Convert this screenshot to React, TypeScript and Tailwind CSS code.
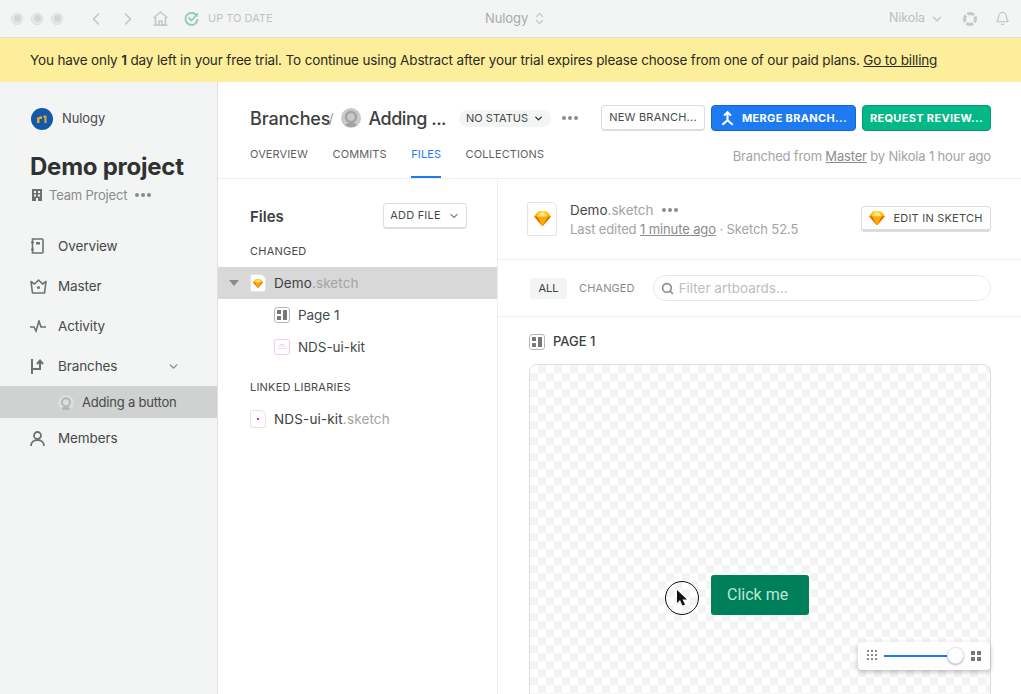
import { Bell, ChevronDown, ChevronLeft, ChevronRight, ChevronsUpDown, Search } from "lucide-react"

const font = "font-['Inter','Liberation_Sans',sans-serif]"

function Diamond({ size = 18 }: { size?: number }) {
  return (
    <svg width={size} height={size * 0.9} viewBox="0 0 20 18">
      <path d="M4.5 1 10 .4 15.5 1 20 6.6 10 18 0 6.6z" fill="#fdb300" />
      <path d="M0 6.6h20L10 18z" fill="#ea6c00" />
      <path d="M4 6.6h12L10 18z" fill="#fdad00" />
      <path d="M4.5 1 4 6.6h12L15.5 1 10 .4z" fill="#fed305" />
      <path d="M10 .4 4 6.6h12z" fill="#fee79a" />
    </svg>
  )
}

function FileIcon({ className, children }: { className: string; children?: React.ReactNode }) {
  return (
    <div className={"relative flex items-center justify-center bg-white border border-[#e4e5e5] rounded-[2px] rounded-tr-[6px] " + className}>
      {children}
    </div>
  )
}

function PageIcon() {
  return (
    <svg width="16" height="16" viewBox="0 0 16 16" className="shrink-0">
      <rect x=".5" y=".5" width="15" height="15" rx="2.5" fill="#fff" stroke="#b5b7b7" />
      <rect x="3" y="3" width="4" height="4" rx=".5" fill="#777" />
      <rect x="3" y="9" width="4" height="4" rx=".5" fill="#777" />
      <rect x="9" y="3" width="4" height="10" rx=".5" fill="#777" />
    </svg>
  )
}

function Avatar({ size, bg, fg, className = "" }: { size: number; bg: string; fg: string; className?: string }) {
  return (
    <svg width={size} height={size} viewBox="0 0 20 20" className={"shrink-0 " + className}>
      <circle cx="10" cy="10" r="10" fill={bg} />
      <circle cx="10" cy="9" r="5" fill="none" stroke={fg} strokeWidth="2.4" />
      <path d="M4 17c2-3 10-3 12 0l-3 2H7z" fill={fg} />
    </svg>
  )
}

function Dots({ className = "" }: { className?: string }) {
  return (
    <span className={"flex gap-[2px] " + className}>
      <span className="w-1 h-1 rounded-full bg-[#8a8c8c]" />
      <span className="w-1 h-1 rounded-full bg-[#8a8c8c]" />
      <span className="w-1 h-1 rounded-full bg-[#8a8c8c]" />
    </span>
  )
}

function Light() {
  return (
    <span className="flex items-center justify-center w-3 h-3 rounded-full border border-[#dcdddd] bg-[#e8e9e9]">
      <span className="w-[7px] h-[7px] rounded-full bg-[#d4d5d5]" />
    </span>
  )
}

function NavItem({ icon, label, right, className = "" }: { icon: React.ReactNode; label: string; right?: React.ReactNode; className?: string }) {
  return (
    <div className={"flex items-center h-10 pt-[2px] pl-[30px] pr-[37px] " + className}>
      <span className="flex w-[28px] shrink-0">{icon}</span>
      <span className="text-[13.5px] tracking-[-0.1px] text-[#474a4a] flex-1">{label}</span>
      {right}
    </div>
  )
}

const stroke = { fill: "none", stroke: "#6f7171", strokeWidth: 2 }

export default function App() {
  return (
    <div className={"w-[1021px] h-[694px] overflow-hidden bg-white flex flex-col " + font}>
      {/* toolbar */}
      <div className="h-[38px] shrink-0 bg-[#f3f4f4] border-b border-[#dcdddd] flex items-center relative pl-[11px] pr-[11px]">
        <div className="flex gap-2">
          <Light />
          <Light />
          <Light />
        </div>
        <ChevronLeft size={20} strokeWidth={2} className="text-[#c6c7c7] ml-[23px]" />
        <ChevronRight size={20} strokeWidth={2} className="text-[#c6c7c7] ml-3" />
        <svg width="15" height="15" viewBox="0 0 15 15" className="ml-[15px]">
          <path d="M7.500 1 1 6.500h1.500V14h3.500v-4h3v4h3.500V6.500H14z" fill="none" stroke="#c6c7c7" strokeWidth="1.600" strokeLinejoin="round" />
          <path d="M0.500 14.200h14" stroke="#c6c7c7" strokeWidth="1.400" />
        </svg>
        <svg width="15" height="15" viewBox="0 0 15 15" className="ml-[16px]">
          <path d="M13 5.500A6 6 0 1 0 13.500 8" fill="none" stroke="#8fcbb8" strokeWidth="1.800" />
          <path d="M4.500 6.500 7.500 9.500 14 2.500" fill="none" stroke="#8fcbb8" strokeWidth="1.800" />
        </svg>
        <span className="ml-[9px] text-[11px] text-[#c2c3c3]">UP TO DATE</span>
        <div className="absolute left-[485px] top-0 h-[37px] flex items-center gap-[4px] text-[13px] tracking-[-0.1px] text-[#a9abab]">
          Nulogy
          <ChevronsUpDown size={15} className="text-[#c6c7c7]" />
        </div>
        <div className="ml-auto flex items-center">
          <span className="text-[12.500px] tracking-[-0.1px] text-[#bdbebe]">Nikola</span>
          <ChevronDown size={14} strokeWidth={2.500} className="text-[#c6c7c7] ml-[5px]" />
          <svg width="16" height="16" viewBox="0 0 16 16" className="ml-[18px]">
            <circle cx="8" cy="8" r="5.500" fill="none" stroke="#c6c7c7" strokeWidth="3" strokeDasharray="7 1.640" strokeDashoffset="3.500" />
          </svg>
          <Bell size={15} strokeWidth={2} className="text-[#c6c7c7] ml-[17px]" />
        </div>
      </div>

      {/* trial banner */}
      <div className="h-[44px] shrink-0 bg-[#fdee9b] flex items-center pl-[30px] text-[13.5px] tracking-[-0.14px] text-[#2b2b22]">
        <span>
          You have only <b className="font-semibold">1</b> day left in your free trial. To continue using Abstract after your trial expires please choose from one of our paid plans.{" "}
          <span className="underline">Go to billing</span>
        </span>
      </div>

      <div className="flex flex-1 min-h-0">
        {/* sidebar */}
        <aside className="w-[218px] shrink-0 bg-[#f3f4f4] border-r border-[#dfe0e0] flex flex-col">
          <div className="flex items-center gap-[9px] pl-[31px] pt-[26px]">
            <svg width="22" height="22" viewBox="0 0 22 22">
              <circle cx="11" cy="11" r="11" fill="#1259ac" />
              <path d="M6 15V9.500l5-1.500v3H8.500v4zM12.500 7.500h3V15h-2V10h-1z" fill="#e5a52a" />
            </svg>
            <span className="text-[13px] tracking-[-0.1px] text-[#474a4a]">Nulogy</span>
          </div>
          <h1 className="pl-[30px] mt-[22px] text-[24px] tracking-[-0.25px] leading-[30px] font-bold text-[#2f3232]">Demo project</h1>
          <div className="flex items-center pl-[32px] mt-[5px] text-[13px] tracking-[-0.2px] leading-[16px] text-[#8a8c8c]">
            <svg width="10" height="12" viewBox="0 0 10 12" className="mr-[7px]">
              <path d="M0 0h10v12H6V9H4v3H0zM2 2v2h2V2zM6 2v2h2V2zM2 5.500v2h2v-2zM6 5.500v2h2v-2z" fill="#6f7171" fillRule="evenodd" />
            </svg>
            Team Project
            <Dots className="ml-[8px]" />
          </div>

          <div className="mt-[22px]">
            <NavItem
              label="Overview"
              icon={
                <svg width="14" height="16" viewBox="0 0 14 16">
                  <path d="M2.500 1H12a1 1 0 0 1 1 1v12a1 1 0 0 1-1 1H2.500z M1 4.500h3M1 11.500h3" {...stroke} strokeWidth={1.600} />
                  <rect x="6" y="4" width="4" height="2.500" fill="#6f7171" />
                </svg>
              }
            />
            <NavItem
              label="Master"
              icon={
                <svg width="17" height="15" viewBox="0 0 17 15">
                  <path d="M1 2.500 4.500 5 8.500 1l4 4L16 2.500 14.500 14h-12z" {...stroke} strokeWidth={1.600} strokeLinejoin="round" />
                  <circle cx="8.500" cy="8.500" r="1.500" fill="#6f7171" />
                </svg>
              }
            />
            <NavItem
              label="Activity"
              icon={
                <svg width="17" height="13" viewBox="0 0 17 13">
                  <path d="M0 7h4l2 4 3-10 2 6h5" {...stroke} strokeWidth={1.600} />
                </svg>
              }
            />
            <NavItem
              label="Branches"
              right={<ChevronDown size={13} strokeWidth={2.500} className="text-[#8a8c8c]" />}
              icon={
                <svg width="15" height="15" viewBox="0 0 15 15">
                  <path d="M2 0v15M2 10h8V2M7 5l3-3.500L13 5" {...stroke} />
                </svg>
              }
            />
          </div>
          <div className="h-8 mt-[1px] pt-[2px] bg-[#d0d1d1] flex items-center pl-[58px] gap-[8px]">
            <Avatar size={16} bg="#dcdddd" fg="#b5b7b7" />
            <span className="text-[13px] tracking-[-0.2px] text-[#474a4a]">Adding a button</span>
          </div>
          <NavItem
            label="Members"
            className="-mt-[1px]"
            icon={
              <svg width="15" height="15" viewBox="0 0 15 15">
                <circle cx="7.500" cy="4.500" r="3.500" {...stroke} strokeWidth={1.800} />
                <path d="M1 15c0-8 13-8 13 0" {...stroke} strokeWidth={1.800} />
              </svg>
            }
          />
        </aside>

        {/* main */}
        <main className="flex-1 min-w-0 flex flex-col">
          <div className="h-[97px] shrink-0 border-b border-[#eeefef] flex flex-col pl-[32px] pr-[30px]">
            <div className="flex items-center pt-[16px] h-[56px]">
              <span className="text-[18px] tracking-[-0.1px] text-[#3d4040] font-medium">Branches</span>
              <span className="text-[14px] text-[#9a9c9c] -ml-[2px]">/</span>
              <Avatar size={20} bg="#c8c9c9" fg="#a2a4a4" className="ml-[8px]" />
              <span className="ml-[7px] text-[18px] tracking-[-0.5px] text-[#3d4040] font-medium">Adding ...</span>
              <span className="ml-[13px] h-[17px] w-[92px] rounded-full bg-[#f3f4f4] text-[11px] text-[#474a4a] flex items-center justify-center gap-[5px]">
                NO STATUS
                <ChevronDown size={11} strokeWidth={3} className="text-[#2f3232]" />
              </span>
              <Dots className="ml-[11px]" />
              <div className="ml-auto flex gap-[6px]">
                <button className="h-[26px] w-[104px] rounded-[4px] bg-white border border-[#dcdddd] border-b-2 text-[11px] tracking-[0.02em] text-[#474a4a]">NEW BRANCH...</button>
                <button className="h-[26px] w-[145px] rounded-[4px] bg-[#1d7af0] border border-[#1566ce] text-[11px] tracking-[0.03em] font-bold text-white flex items-center justify-center gap-[7px]">
                  <svg width="15" height="15" viewBox="0 0 13 13">
                    <path d="M6.500 8 2 12M6.500 8l4.500 4M3.500 4l3-3 3 3M6.500 1v7" fill="none" stroke="#fff" strokeWidth="1.800" />
                  </svg>
                  MERGE BRANCH...
                </button>
                <button className="h-[26px] w-[129px] rounded-[4px] bg-[#03b886] border border-[#049a71] text-[11px] tracking-[0.03em] font-bold text-white">REQUEST REVIEW...</button>
              </div>
            </div>
            <div className="flex items-end flex-1">
              <div className="flex gap-[24.500px] text-[11px] tracking-[0.01em] text-[#5f6262]">
                <span className="h-[38px] pt-[6px]">OVERVIEW</span>
                <span className="h-[38px] pt-[6px]">COMMITS</span>
                <span className="h-[38px] pt-[6px] text-[#1d7af0] border-b-2 border-[#1d7af0]">FILES</span>
                <span className="h-[38px] pt-[6px]">COLLECTIONS</span>
              </div>
              <span className="ml-auto self-start mt-[9px] text-[13px] tracking-[-0.17px] text-[#a2a4a4]">
                Branched from <span className="underline text-[#8a8c8c]">Master</span> by Nikola 1 hour ago
              </span>
            </div>
          </div>

          <div className="flex flex-1 min-h-0">
            {/* files pane */}
            <section className="w-[280px] shrink-0 border-r border-[#eeefef]">
              <div className="flex items-center justify-between pl-[32px] pr-[30px] pt-[24px]">
                <span className="text-[15px] font-semibold text-[#3d4040] pt-[2px]">Files</span>
                <button className="h-[26px] w-[84px] rounded-[4px] bg-white border border-[#dcdddd] border-b-2 text-[11px] tracking-[0.02em] text-[#474a4a] flex items-center justify-center gap-[7px]">
                  ADD FILE
                  <ChevronDown size={12} strokeWidth={2.500} className="text-[#8a8c8c]" />
                </button>
              </div>
              <div className="pl-[32px] mt-[14px] text-[11px] leading-[16px] tracking-[0.02em] text-[#474a4a]">CHANGED</div>
              <div className="mt-[8px] h-8 bg-[#d8d8d8] flex items-center pl-[11px]">
                <span className="w-0 h-0 border-x-[5px] border-x-transparent border-t-[6px] border-t-[#8a8c8c]" />
                <FileIcon className="ml-[11px] w-[16px] h-[18px]">
                  <Diamond size={10} />
                </FileIcon>
                <span className="ml-[8px] text-[13.5px] tracking-[0.1px] text-[#3d4040]">Demo<span className="text-[#a2a4a4]">.sketch</span></span>
              </div>
              <div className="h-8 flex items-center pl-[56px] gap-[8px] text-[13.5px] tracking-[-0.05px] text-[#474a4a]">
                <PageIcon />
                Page 1
              </div>
              <div className="h-8 flex items-center pl-[56px] gap-[8px] text-[13.5px] tracking-[-0.05px] text-[#474a4a]">
                <svg width="16" height="16" viewBox="0 0 16 16" className="shrink-0">
                  <rect x=".5" y=".5" width="15" height="15" rx="2" fill="#fff" stroke="#f5c6f2" />
                  <path d="M4 7h8M4 9.500h8M6 5.500h4" stroke="#f5d6f2" strokeWidth="1.200" />
                </svg>
                NDS-ui-kit
              </div>
              <div className="pl-[32px] mt-[16px] text-[11px] leading-[16px] tracking-[0.02em] text-[#474a4a]">LINKED LIBRARIES</div>
              <div className="mt-[8px] h-8 flex items-center pl-[32px] gap-[8px] text-[13.5px] tracking-[0.15px] text-[#3d4040]">
                <FileIcon className="w-[16px] h-[18px]">
                  <span className="w-[2px] h-[2px] bg-[#c026c0]" />
                </FileIcon>
                <span>NDS-ui-kit<span className="text-[#a2a4a4]">.sketch</span></span>
              </div>
            </section>

            {/* file detail */}
            <section className="flex-1 min-w-0 flex flex-col">
              <div className="h-[81px] shrink-0 border-b border-[#eeefef] flex items-center pl-[29px] pr-[30px]">
                <FileIcon className="w-[30px] h-[34px] -mt-[1px]">
                  <Diamond size={17} />
                </FileIcon>
                <div className="ml-[13px] mt-[1px]">
                  <div className="flex items-center text-[13.5px] leading-[18px] text-[#474a4a]">
                    Demo<span className="text-[#a2a4a4]">.sketch</span>
                    <Dots className="ml-[8px]" />
                  </div>
                  <div className="text-[13px] tracking-[-0.12px] leading-[20px] text-[#a2a4a4]">
                    Last edited <span className="underline text-[#8a8c8c]">1 minute ago</span> · Sketch 52.5
                  </div>
                </div>
                <button className="ml-auto h-[26px] w-[130px] rounded-[4px] bg-white border border-[#dcdddd] border-b-[3px] text-[11px] tracking-[0.02em] text-[#474a4a] flex items-center justify-center gap-[8px]">
                  <Diamond size={16} />
                  EDIT IN SKETCH
                </button>
              </div>
              <div className="h-[57px] shrink-0 border-b border-[#eeefef] flex items-center pl-[32px] pr-[30px]">
                <span className="h-[21px] w-[37px] rounded-[3px] bg-[#f3f4f4] flex items-center justify-center text-[11px] text-[#3d4040]">ALL</span>
                <span className="ml-[12px] text-[11px] tracking-[0.01em] text-[#8a8c8c]">CHANGED</span>
                <div className="ml-[18px] flex-1 h-[26px] rounded-full border border-[#e6e7e7] flex items-center pl-[7px] gap-[5px] text-[13.5px] text-[#bdbebe]">
                  <Search size={13} strokeWidth={3} className="text-[#8a8c8c]" />
                  Filter artboards...
                </div>
              </div>
              <div className="flex items-center gap-[8px] pl-[31px] pt-[15px] text-[13px] font-medium text-[#3d4040]">
                <PageIcon />
                PAGE 1
              </div>
              <div className="relative shrink-0 mr-[30px] ml-[31px] mt-[12px] h-[400px] rounded-[8px] border border-[#dcdddd] bg-[conic-gradient(#f3f4f4_25%,#ffffff_0_50%,#f3f4f4_0_75%,#ffffff_0)] bg-[length:16px_16px]">
                <button className="absolute left-[181px] top-[210px] w-[98px] h-[40px] rounded-[3px] bg-[#008059] pl-[16px] text-left text-[16px] text-[#bfe5d8] font-['Roboto','Liberation_Sans',sans-serif]">Click me</button>
                <div className="absolute left-[135px] top-[216px] w-[34px] h-[34px] rounded-full border border-[#111] flex items-center justify-center">
                  <svg width="12" height="16" viewBox="0 0 12 16">
                    <path d="M1 0v13l3-3 2.500 5.500 2.500-1L6.500 9.500H11z" fill="#111" />
                  </svg>
                </div>
                <div className="absolute left-[328px] top-[277px] w-[132px] h-[28px] rounded-[4px] bg-white shadow-[0_2px_5px_rgba(0,0,0,0.25)] flex items-center pl-[9px] pr-[9px]">
                  <svg width="11" height="11" viewBox="0 0 11 11">
                    <path d="M0 0h2v2H0zM4 0h2v2H4zM8 0h2v2H8zM0 4h2v2H0zM4 4h2v2H4zM8 4h2v2H8zM0 8h2v2H0zM4 8h2v2H4zM8 8h2v2H8z" fill="#8a8c8c" />
                  </svg>
                  <div className="relative flex-1 mx-[6px] h-[2px] bg-[#1d7af0]">
                    <span className="absolute -right-[5px] -top-[8px] w-[17px] h-[17px] rounded-full bg-white border border-[#e4e5e5] shadow-[0_1px_2px_rgba(0,0,0,0.3)]" />
                  </div>
                  <svg width="10" height="10" viewBox="0 0 10 10" className="ml-[6px]">
                    <path d="M0 0h4v4H0zM6 0h4v4H6zM0 6h4v4H0zM6 6h4v4H6z" fill="#777" />
                  </svg>
                </div>
              </div>
            </section>
          </div>
        </main>
      </div>
    </div>
  )
}
